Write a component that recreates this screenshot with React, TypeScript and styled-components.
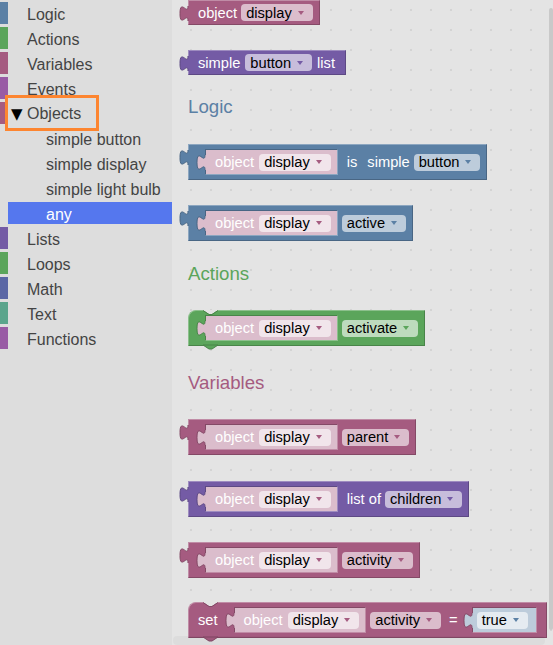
import React from 'react';
import styled, { createGlobalStyle } from 'styled-components';

type Palette = { base: string; light: string; dark: string; field: string };

const LOGIC: Palette = { base: '#5b80a5', light: '#8ca6c0', dark: '#496684', field: '#bdccdb' };
const ACTIONS: Palette = { base: '#5ba55b', light: '#8cc08c', dark: '#498449', field: '#bddbbd' };
const OBJECT: Palette = { base: '#a55b80', light: '#c08ca6', dark: '#844966', field: '#dbbdcc' };
const LIST: Palette = { base: '#745ba5', light: '#9e8cc0', dark: '#5d4984', field: '#c7bddb' };

// shadow blocks plugged into the sockets
const OBJECT_SHADOW = { base: '#dbbdcc', field: '#f1e5eb', arrow: '#a55b80' };
const LOGIC_SHADOW = { base: '#bdccdb', field: '#e5ebf1', arrow: '#5b80a5' };

const FLYOUT_BG = '#e4e4e4';

const topCategories = [
  { name: 'Logic', color: '#5b80a5' },
  { name: 'Actions', color: '#5ba55b' },
  { name: 'Variables', color: '#a55b80' },
  { name: 'Events', color: '#995ba5' },
];

const objectItems = ['simple button', 'simple display', 'simple light bulb'];

const bottomCategories = [
  { name: 'Lists', color: '#745ba5' },
  { name: 'Loops', color: '#5ba55b' },
  { name: 'Math', color: '#5b67a5' },
  { name: 'Text', color: '#5ba58c' },
  { name: 'Functions', color: '#995ba5' },
];

const GlobalStyle = createGlobalStyle`
  html, body {
    margin: 0;
    padding: 0;
  }
  body {
    font-family: 'Liberation Sans', Arial, sans-serif;
  }
`;

const Page = styled.div`
  display: flex;
  width: 553px;
  height: 645px;
  overflow: hidden;
`;

const Toolbox = styled.nav`
  flex: none;
  width: 172px;
  padding-top: 2px;
  box-sizing: border-box;
  background: #ddd;
`;

const Row = styled.div<{ $strip?: string; $indent: number; $selected?: boolean }>`
  display: flex;
  align-items: center;
  box-sizing: border-box;
  height: 22px;
  margin-bottom: 3px;
  padding: 3px 0 0 ${(p) => p.$indent}px;
  border-left: 8px solid ${(p) => p.$strip ?? 'transparent'};
  background: ${(p) => (p.$selected ? '#5577ee' : 'transparent')};
  background-clip: padding-box;
  color: ${(p) => (p.$selected ? '#fff' : '#444')};
  font-size: 16px;
  white-space: nowrap;
`;

const Focused = styled.span`
  display: flex;
  align-items: center;
  box-sizing: border-box;
  width: 88px;
  height: 30px;
  margin-top: -3px;
  padding: 2px 0 0 3px;
  outline: 3px solid #fd8530;
`;

const Caret = styled.span`
  width: 16px;
  font-family: 'DejaVu Sans', sans-serif;
  font-size: 15px;
  color: #000;
`;

const Flyout = styled.div`
  position: relative;
  flex: 1;
  display: flex;
  flex-direction: column;
  align-items: flex-start;
  padding-left: 16px;
  background-color: ${FLYOUT_BG};
  background-image: radial-gradient(circle, #d4d4d4 0 1px, transparent 1.6px);
  background-size: 20px 20px;
  background-position: 9px 0;
`;

const Heading = styled.div<{ $color: string; $mt: number }>`
  height: 22px;
  margin-top: ${(p) => p.$mt}px;
  line-height: 22px;
  font-size: 18.67px;
  color: ${(p) => p.$color};
`;

const Block = styled.div<{
  $p: Palette;
  $h: number;
  $mt: number;
  $pr?: number;
  $gap?: number;
  $stack?: boolean;
}>`
  position: relative;
  display: flex;
  align-items: center;
  gap: ${(p) => p.$gap ?? 4}px;
  box-sizing: border-box;
  height: ${(p) => p.$h}px;
  margin-top: ${(p) => p.$mt}px;
  padding: 0 ${(p) => p.$pr ?? 6}px 0 9px;
  border: 1px solid;
  border-color: ${(p) => `${p.$p.light} ${p.$p.dark} ${p.$p.dark} ${p.$p.light}`};
  border-top-left-radius: ${(p) => (p.$stack ? 8 : 0)}px;
  background: ${(p) => p.$p.base};
  color: #fff;
  font-size: 14.67px;
  white-space: nowrap;
`;

const Label = styled.span<{ $ml?: number }>`
  margin-left: ${(p) => p.$ml ?? 0}px;
`;

const Dropdown = styled.span<{ $bg: string }>`
  display: flex;
  align-items: center;
  gap: 6px;
  box-sizing: border-box;
  height: 17px;
  padding: 0 9px 0 5px;
  border-radius: 4px;
  background: ${(p) => p.$bg};
  color: #000;
`;

const Shadow = styled.div<{ $bg: string; $edge: string; $hi: string; $ml: number; $pl: number; $pr: number }>`
  position: relative;
  display: flex;
  align-items: center;
  gap: 5px;
  box-sizing: border-box;
  height: 26px;
  margin-left: ${(p) => p.$ml}px;
  padding: 0 ${(p) => p.$pr}px 0 ${(p) => p.$pl}px;
  border: 1px solid;
  border-color: ${(p) => `${p.$edge} ${p.$hi} ${p.$hi} ${p.$edge}`};
  background: ${(p) => p.$bg};
`;

const ArrowSvg = styled.svg`
  display: block;
  flex: none;
`;

const TabSvg = styled.svg`
  position: absolute;
  top: 5px;
  left: -10px;
  overflow: visible;
`;

const NotchSvg = styled.svg`
  position: absolute;
  top: -1px;
  left: 14px;
`;

const NextSvg = styled.svg`
  position: absolute;
  bottom: -5px;
  left: 14px;
  overflow: visible;
`;

const VScroll = styled.div`
  position: absolute;
  top: 8px;
  right: 0;
  width: 4px;
  height: 622px;
  border-radius: 2px;
  background: #c9c9c9;
`;

const HScroll = styled.div`
  position: absolute;
  left: 1px;
  right: 8px;
  bottom: 0;
  height: 9px;
  border-radius: 4px;
  background: rgba(0, 0, 0, 0.03);
`;

const Arrow = ({ color }: { color: string }) => (
  <ArrowSvg width="6" height="4" viewBox="0 0 6 4">
    <path d="M0,0 H6 L3,4 Z" fill={color} />
  </ArrowSvg>
);

const OutputTab = ({ fill, stroke }: { fill: string; stroke: string }) => (
  <TabSvg width="10" height="16" viewBox="0 0 10 16">
    <path d="M9,0 C9,10 1,-8 1,7.5 S9,5 9,15 H10 V0 Z" fill={fill} />
    <path d="M9,0 C9,10 1,-8 1,7.5 S9,5 9,15" fill="none" stroke={stroke} />
  </TabSvg>
);

const StackNotches = ({ p }: { p: Palette }) => (
  <>
    <NotchSvg width="15" height="5" viewBox="0 0 15 5">
      <path d="M0,0 L6,4 H9 L15,0 Z" fill={FLYOUT_BG} />
      <path d="M0,0.5 L6,4.5 H9 L15,0.5" fill="none" stroke={p.dark} />
    </NotchSvg>
    <NextSvg width="15" height="5" viewBox="0 0 15 5">
      <path d="M0,0 L6,4 H9 L15,0 Z" fill={p.base} stroke={p.dark} />
    </NextSvg>
  </>
);

const Field = ({ text, bg, arrow }: { text: string; bg: string; arrow: string }) => (
  <Dropdown $bg={bg}>
    <span>{text}</span>
    <Arrow color={arrow} />
  </Dropdown>
);

const ObjectSocket = ({ parent, ml = 7 }: { parent: Palette; ml?: number }) => (
  <Shadow $bg={OBJECT_SHADOW.base} $edge={parent.dark} $hi={parent.light} $ml={ml} $pl={9} $pr={6}>
    <OutputTab fill={OBJECT_SHADOW.base} stroke={parent.dark} />
    <Label>object</Label>
    <Field text="display" bg={OBJECT_SHADOW.field} arrow={OBJECT_SHADOW.arrow} />
  </Shadow>
);

const App = () => {
  return (
    <>
      <GlobalStyle />
      <Page>
        <Toolbox>
          {topCategories.map((c) => (
            <Row key={c.name} $strip={c.color} $indent={19}>
              {c.name}
            </Row>
          ))}
          <Row $strip="#a55b80" $indent={0}>
            <Focused>
              <Caret>▼</Caret>
              Objects
            </Focused>
          </Row>
          {objectItems.map((name) => (
            <Row key={name} $indent={38}>
              {name}
            </Row>
          ))}
          <Row $indent={38} $selected>
            any
          </Row>
          {bottomCategories.map((c) => (
            <Row key={c.name} $strip={c.color} $indent={19}>
              {c.name}
            </Row>
          ))}
        </Toolbox>

        <Flyout>
          <Block $p={OBJECT} $h={25} $mt={0}>
            <OutputTab fill={OBJECT.base} stroke={OBJECT.dark} />
            <Label>object</Label>
            <Field text="display" bg={OBJECT.field} arrow={OBJECT.base} />
          </Block>

          <Block $p={LIST} $h={25} $mt={25} $gap={5} $pr={10}>
            <OutputTab fill={LIST.base} stroke={LIST.dark} />
            <Label>simple</Label>
            <Field text="button" bg={LIST.field} arrow={LIST.base} />
            <Label>list</Label>
          </Block>

          <Heading $color={LOGIC.base} $mt={21}>
            Logic
          </Heading>

          <Block $p={LOGIC} $h={36} $mt={26}>
            <OutputTab fill={LOGIC.base} stroke={LOGIC.dark} />
            <ObjectSocket parent={LOGIC} />
            <Label $ml={5}>is</Label>
            <Label $ml={6}>simple</Label>
            <Field text="button" bg={LOGIC.field} arrow={LOGIC.base} />
          </Block>

          <Block $p={LOGIC} $h={36} $mt={25}>
            <OutputTab fill={LOGIC.base} stroke={LOGIC.dark} />
            <ObjectSocket parent={LOGIC} />
            <Field text="active" bg={LOGIC.field} arrow={LOGIC.base} />
          </Block>

          <Heading $color={ACTIONS.base} $mt={22}>
            Actions
          </Heading>

          <Block $p={ACTIONS} $h={36} $mt={25} $stack>
            <StackNotches p={ACTIONS} />
            <ObjectSocket parent={ACTIONS} />
            <Field text="activate" bg={ACTIONS.field} arrow={ACTIONS.base} />
          </Block>

          <Heading $color={OBJECT.base} $mt={26}>
            Variables
          </Heading>

          <Block $p={OBJECT} $h={36} $mt={25}>
            <OutputTab fill={OBJECT.base} stroke={OBJECT.dark} />
            <ObjectSocket parent={OBJECT} />
            <Field text="parent" bg={OBJECT.field} arrow={OBJECT.base} />
          </Block>

          <Block $p={LIST} $h={36} $mt={26}>
            <OutputTab fill={LIST.base} stroke={LIST.dark} />
            <ObjectSocket parent={LIST} />
            <Label $ml={5}>list of</Label>
            <Field text="children" bg={LIST.field} arrow={LIST.base} />
          </Block>

          <Block $p={OBJECT} $h={36} $mt={25}>
            <OutputTab fill={OBJECT.base} stroke={OBJECT.dark} />
            <ObjectSocket parent={OBJECT} />
            <Field text="activity" bg={OBJECT.field} arrow={OBJECT.base} />
          </Block>

          <Block $p={OBJECT} $h={36} $mt={24} $pr={9} $stack>
            <StackNotches p={OBJECT} />
            <Label>set</Label>
            <ObjectSocket parent={OBJECT} ml={12} />
            <Field text="activity" bg={OBJECT.field} arrow={OBJECT.base} />
            <Label $ml={4}>=</Label>
            <Shadow $bg={LOGIC_SHADOW.base} $edge={OBJECT.dark} $hi={OBJECT.light} $ml={10} $pl={4} $pr={8}>
              <OutputTab fill={LOGIC_SHADOW.base} stroke={OBJECT.dark} />
              <Field text="true" bg={LOGIC_SHADOW.field} arrow={LOGIC_SHADOW.arrow} />
            </Shadow>
          </Block>

          <VScroll />
          <HScroll />
        </Flyout>
      </Page>
    </>
  );
};

export default App;
